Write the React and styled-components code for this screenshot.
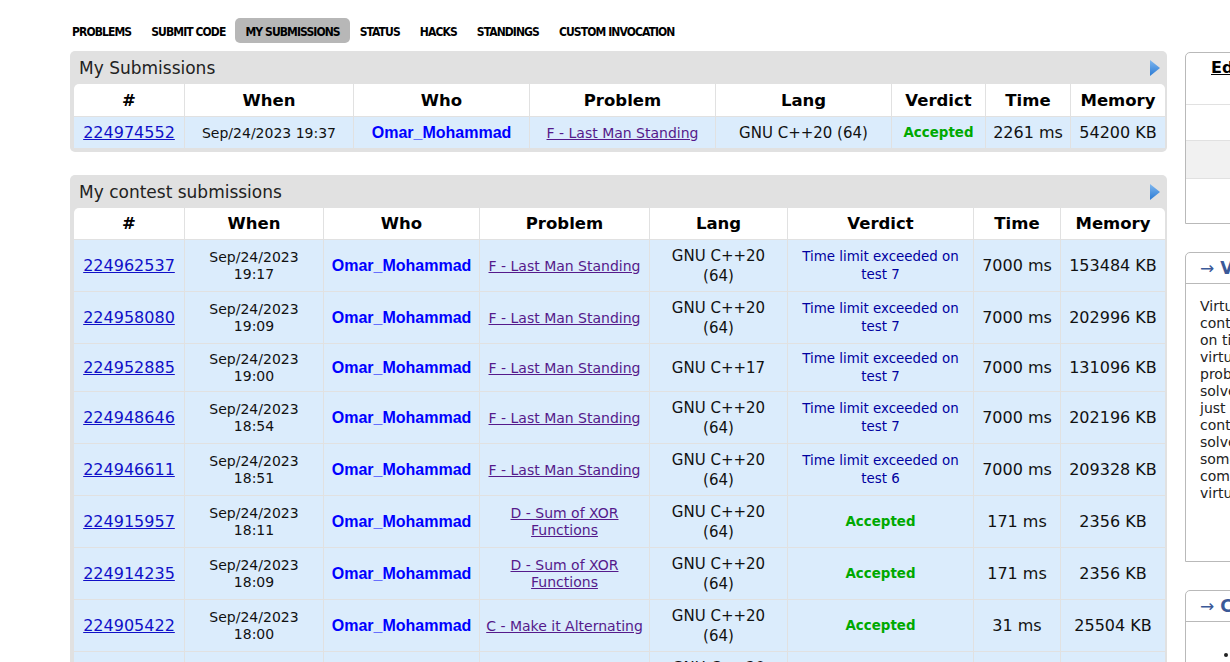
import React from 'react';
import styled, { createGlobalStyle } from 'styled-components';

const GlobalStyle = createGlobalStyle`
  html, body {
    margin: 0;
    padding: 0;
    overflow: hidden;
    background: #fff;
    font-family: "DejaVu Sans", Verdana, sans-serif;
    color: #222;
  }
`;

const Page = styled.div`
  display: flex;
  gap: 18px;
  padding: 18px 0 0 70px;
  width: 1600px;
`;

const MainColumn = styled.div`
  width: 1097px;
  flex-shrink: 0;
`;

const Nav = styled.nav`
  display: flex;
  margin-left: -8px;
  height: 25px;
  margin-bottom: 8px;
`;

const NavItem = styled.a`
  display: flex;
  align-items: center;
  padding: 2px 10px 0;
  border-radius: 5px;
  font-family: "DejaVu Sans Condensed", "DejaVu Sans", sans-serif;
  font-stretch: condensed;
  font-weight: bold;
  font-size: 12px;
  letter-spacing: -0.9px;
  color: #000;
  text-transform: uppercase;
  background: ${({ $active }) => ($active ? '#b7b7b7' : 'transparent')};
`;

const RoundBox = styled.section`
  background: #e1e1e1;
  border-radius: 5px;
  padding: 0 2px 4px 4px;
  margin-bottom: 23px;
`;

const BoxTitle = styled.div`
  display: flex;
  align-items: center;
  justify-content: space-between;
  height: 33px;
  padding: 0 5px 0 5px;
  font-size: 17px;
  color: #222;
`;

const Table = styled.table`
  width: 100%;
  border-collapse: collapse;
  table-layout: fixed;
  background: #fff;
  border-radius: 5px 5px 0 0;
  overflow: hidden;
`;

const Th = styled.th`
  width: ${({ $w }) => ($w ? `${$w}px` : 'auto')};
  height: ${({ $h }) => $h || 32}px;
  padding: 0;
  font-size: 16.5px;
  font-weight: bold;
  color: #000;
  text-align: center;
  border-left: 1px solid #e1e1e1;
  border-bottom: 1px solid #e1e1e1;
  &:first-child { border-left: none; }
`;

const Row = styled.tr`
  background: #dbecfc;
`;

const Td = styled.td`
  padding: 6px 3px 5px;
  text-align: center;
  vertical-align: middle;
  border-left: 1px solid #e1e1e1;
  border-top: 1px solid #e1e1e1;
  font-size: 14px;
  line-height: 17px;
  &:first-child { border-left: none; }
`;

const IdLink = styled.a`
  font-size: 16px;
  color: #1010c8;
  text-decoration: underline;
`;

const DateText = styled.span`
  font-size: 14px;
  line-height: 17px;
  color: #111;
`;

const UserLink = styled.a`
  font-family: "Liberation Sans", Arial, sans-serif;
  font-weight: bold;
  font-size: 16px;
  color: #0000ff;
`;

const ProblemLink = styled.a`
  font-size: 14px;
  line-height: 17px;
  color: #551a8b;
  text-decoration: underline;
`;

const LangText = styled.span`
  font-size: 15px;
  line-height: 20px;
  color: #111;
`;

const Verdict = styled.span`
  font-size: 13.4px;
  line-height: 18px;
  font-weight: ${({ $ok }) => ($ok ? 'bold' : 'normal')};
  color: ${({ $ok }) => ($ok ? '#00a900' : '#0000a0')};
`;

const Num = styled.span`
  font-size: 16px;
  color: #111;
  white-space: nowrap;
`;

const Sidebar = styled.aside`
  width: 300px;
  flex-shrink: 0;
  padding-top: 34px;
  display: flex;
  flex-direction: column;
  gap: 28px;
`;

const SideBox = styled.div`
  border: 1px solid #b9b9b9;
  border-radius: 5px 5px 0 0;
  background: #fff;
  height: ${({ $h }) => ($h ? `${$h}px` : 'auto')};
  overflow: hidden;
`;

const ContestTitle = styled.div`
  height: 52px;
  padding: 5px 0 0 25px;
  box-sizing: border-box;
  border-bottom: 1px solid #e1e1e1;
  font-size: 16px;
  font-weight: bold;
  line-height: 20px;
  white-space: nowrap;
  a { color: #000; text-decoration: underline; }
`;

const TitleSecond = styled.div`
  padding-left: 70px;
`;

const SideRow = styled.div`
  height: ${({ $h }) => $h}px;
  display: flex;
  align-items: center;
  justify-content: center;
  border-bottom: ${({ $last }) => ($last ? 'none' : '1px solid #e1e1e1')};
  background: ${({ $gray }) => ($gray ? '#f1f1f1' : '#fff')};
  font-size: 14px;
  color: #222;
`;

const SideCaption = styled.div`
  height: 30px;
  display: flex;
  align-items: center;
  padding-left: 14px;
  border-bottom: 1px solid #b9b9b9;
  font-size: 17px;
  font-weight: bold;
  color: #3b5998;
  white-space: nowrap;
`;

const Arrow = styled.span`
  font-weight: normal;
  margin-right: 6px;
`;

const SideText = styled.div`
  padding: 14px 14px;
  font-size: 14px;
  line-height: 17px;
  color: #222;
  white-space: nowrap;
`;

const MaterialList = styled.ul`
  margin: 0;
  padding: 22px 0 0 53px;
  font-size: 14px;
  line-height: 20px;
`;

const PlayIcon = () => (
  <svg width="10" height="16" viewBox="0 0 10 16">
    <defs>
      <linearGradient id="pg" x1="0" y1="0" x2="0" y2="1">
        <stop offset="0" stopColor="#7fb7ef" />
        <stop offset="1" stopColor="#2a7ad4" />
      </linearGradient>
    </defs>
    <polygon points="0,0 10,8 0,16" fill="url(#pg)" />
  </svg>
);

const navItems = ['Problems', 'Submit Code', 'My Submissions', 'Status', 'Hacks', 'Standings', 'Custom Invocation'];

const mySubs = [
  { id: '224974552', when: 'Sep/24/2023 19:37', problem: 'F - Last Man Standing', lang: 'GNU C++20 (64)', ok: true, verdict: 'Accepted', time: '2261 ms', mem: '54200 KB' },
];

const tle = (t) => `Time limit exceeded on test ${t}`;

const contestSubs = [
  { id: '224962537', time0: '19:17', problem: 'F - Last Man Standing', lang: ['GNU C++20', '(64)'], verdict: tle(7), time: '7000 ms', mem: '153484 KB' },
  { id: '224958080', time0: '19:09', problem: 'F - Last Man Standing', lang: ['GNU C++20', '(64)'], verdict: tle(7), time: '7000 ms', mem: '202996 KB' },
  { id: '224952885', time0: '19:00', problem: 'F - Last Man Standing', lang: ['GNU C++17'], verdict: tle(7), time: '7000 ms', mem: '131096 KB' },
  { id: '224948646', time0: '18:54', problem: 'F - Last Man Standing', lang: ['GNU C++20', '(64)'], verdict: tle(7), time: '7000 ms', mem: '202196 KB' },
  { id: '224946611', time0: '18:51', problem: 'F - Last Man Standing', lang: ['GNU C++20', '(64)'], verdict: tle(6), time: '7000 ms', mem: '209328 KB' },
  { id: '224915957', time0: '18:11', problem: ['D - Sum of XOR', 'Functions'], lang: ['GNU C++20', '(64)'], ok: true, verdict: 'Accepted', time: '171 ms', mem: '2356 KB' },
  { id: '224914235', time0: '18:09', problem: ['D - Sum of XOR', 'Functions'], lang: ['GNU C++20', '(64)'], ok: true, verdict: 'Accepted', time: '171 ms', mem: '2356 KB' },
  { id: '224905422', time0: '18:00', problem: 'C - Make it Alternating', lang: ['GNU C++20', '(64)'], ok: true, verdict: 'Accepted', time: '31 ms', mem: '25504 KB' },
  { id: '224899731', time0: '17:52', problem: 'B - Chips on the Board', lang: ['GNU C++20', '(64)'], ok: true, verdict: 'Accepted', time: '46 ms', mem: '2400 KB' },
];

const lines = (v) => (Array.isArray(v) ? v.map((l, i) => (i ? [<br key={i} />, l] : l)) : v);

const virtualText = [
  'Virtual contest is a way to take part in past',
  'contest, as close as possible to participation',
  'on time. It is supported only ICPC mode for',
  "virtual contests. If you've seen these",
  'problems, a virtual contest is not for you -',
  'solve these problems in the archive. If you',
  'just want to solve some problem from a',
  'contest, a virtual contest is not for you -',
  'solve this problem in the archive. Never use',
  "someone else's code, read the tutorials or",
  'communicate with other person during a',
  'virtual contest.',
];

const App = () => {
  return (
    <>
      <GlobalStyle />
      <Page>
        <MainColumn>
          <Nav>
            {navItems.map((n) => (
              <NavItem key={n} $active={n === 'My Submissions'}>{n}</NavItem>
            ))}
          </Nav>

          <RoundBox>
            <BoxTitle>
              <span>My Submissions</span>
              <PlayIcon />
            </BoxTitle>
            <Table>
              <thead>
                <tr>
                  <Th $w={110}>#</Th>
                  <Th $w={168}>When</Th>
                  <Th $w={175}>Who</Th>
                  <Th $w={185}>Problem</Th>
                  <Th $w={175}>Lang</Th>
                  <Th $w={93}>Verdict</Th>
                  <Th $w={84}>Time</Th>
                  <Th>Memory</Th>
                </tr>
              </thead>
              <tbody>
                {mySubs.map((s) => (
                  <Row key={s.id}>
                    <Td><IdLink>{s.id}</IdLink></Td>
                    <Td><DateText>{s.when}</DateText></Td>
                    <Td><UserLink>Omar_Mohammad</UserLink></Td>
                    <Td><ProblemLink>{s.problem}</ProblemLink></Td>
                    <Td><LangText>{s.lang}</LangText></Td>
                    <Td><Verdict $ok={s.ok}>{s.verdict}</Verdict></Td>
                    <Td><Num>{s.time}</Num></Td>
                    <Td><Num>{s.mem}</Num></Td>
                  </Row>
                ))}
              </tbody>
            </Table>
          </RoundBox>

          <RoundBox>
            <BoxTitle>
              <span>My contest submissions</span>
              <PlayIcon />
            </BoxTitle>
            <Table>
              <thead>
                <tr>
                  <Th $w={110} $h={31}>#</Th>
                  <Th $w={138} $h={31}>When</Th>
                  <Th $w={155} $h={31}>Who</Th>
                  <Th $w={169} $h={31}>Problem</Th>
                  <Th $w={137} $h={31}>Lang</Th>
                  <Th $w={185} $h={31}>Verdict</Th>
                  <Th $w={86} $h={31}>Time</Th>
                  <Th $h={31}>Memory</Th>
                </tr>
              </thead>
              <tbody>
                {contestSubs.map((s) => (
                  <Row key={s.id}>
                    <Td><IdLink>{s.id}</IdLink></Td>
                    <Td><DateText>Sep/24/2023<br />{s.time0}</DateText></Td>
                    <Td><UserLink>Omar_Mohammad</UserLink></Td>
                    <Td><ProblemLink>{lines(s.problem)}</ProblemLink></Td>
                    <Td><LangText>{lines(s.lang)}</LangText></Td>
                    <Td><Verdict $ok={s.ok}>{s.verdict}</Verdict></Td>
                    <Td><Num>{s.time}</Num></Td>
                    <Td><Num>{s.mem}</Num></Td>
                  </Row>
                ))}
              </tbody>
            </Table>
          </RoundBox>
        </MainColumn>

        <Sidebar>
          <SideBox>
            <ContestTitle>
              <a>Educational Codeforces Round 155</a>
              <TitleSecond><a>(Rated for Div. 2)</a></TitleSecond>
            </ContestTitle>
            <SideRow $h={35}>Finished</SideRow>
            <SideRow $h={37} $gray>Practice</SideRow>
            <SideRow $h={44} $last>Virtual participation</SideRow>
          </SideBox>

          <SideBox $h={308}>
            <SideCaption><Arrow>→</Arrow>Virtual participation</SideCaption>
            <SideText>
              {virtualText.map((l, i) => <div key={i}>{l}</div>)}
            </SideText>
          </SideBox>

          <SideBox>
            <SideCaption><Arrow>→</Arrow>Contest materials</SideCaption>
            <MaterialList>
              <li>Announcement</li>
              <li>Tutorial</li>
            </MaterialList>
          </SideBox>
        </Sidebar>
      </Page>
    </>
  );
};

export default App;
